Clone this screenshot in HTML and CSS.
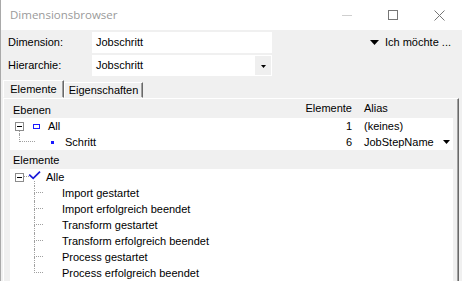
FILE: index.html
```html
<!DOCTYPE html>
<html>
<head>
<meta charset="utf-8">
<link rel="stylesheet" href="styles.css">
</head>
<body>
<div class="window">
  <div class="titlebar">
    <span class="title">Dimensionsbrowser</span>
    <div class="cbtns">
      <span class="cbtn"><svg width="10" height="10" viewBox="0 0 10 10"><path d="M0 5.5H10" stroke="#cfcfcf" stroke-width="1"/></svg></span>
      <span class="cbtn"><svg width="10" height="10" viewBox="0 0 10 10"><rect x="0.5" y="0.5" width="9" height="9" fill="none" stroke="#767676"/></svg></span>
      <span class="cbtn"><svg width="11" height="11" viewBox="0 0 11 11"><path d="M0.5 0.5L10.5 10.5M10.5 0.5L0.5 10.5" stroke="#767676" stroke-width="1"/></svg></span>
    </div>
  </div>
  <div class="content">
    <div class="form">
      <div class="fields">
        <div class="field"><label class="lbl">Dimension:</label><div class="input">Jobschritt</div></div>
        <div class="field"><label class="lbl">Hierarchie:</label>
          <div class="combo"><span class="combo-text">Jobschritt</span><span class="dd"><svg width="5" height="3" viewBox="0 0 5 3"><path d="M0 0H5L2.5 3Z" fill="#000"/></svg></span></div>
        </div>
      </div>
      <div class="menu"><svg width="9" height="5" viewBox="0 0 9 5"><path d="M0 0H9L4.5 5Z" fill="#000"/></svg><span>Ich möchte ...</span></div>
    </div>
    <div class="tabs">
      <div class="tab active">Elemente</div>
      <div class="tab">Eigenschaften</div>
    </div>
    <div class="panel">
      <div class="hdr"><span class="c-name">Ebenen</span><span class="c-num">Elemente</span><span class="c-alias">Alias</span></div>
      <div class="list">
        <div class="row">
          <div class="c-name">
            <span class="tog-col"><span class="box"><span class="minus"></span></span><span class="vdots"></span></span>
            <span class="lvl-rect"></span>
            <span class="txt all">All</span>
          </div>
          <span class="c-num">1</span>
          <span class="c-alias">(keines)</span>
        </div>
        <div class="row">
          <div class="c-name">
            <span class="conn-l"></span>
            <span class="lvl-sq"></span>
            <span class="txt schritt">Schritt</span>
          </div>
          <span class="c-num">6</span>
          <span class="c-alias alias-dd">JobStepName<svg width="7" height="4" viewBox="0 0 7 4"><path d="M0 0H7L3.5 4Z" fill="#000"/></svg></span>
        </div>
      </div>
      <div class="sec">Elemente</div>
      <div class="tree">
        <div class="trow root">
          <span class="box"><span class="minus"></span></span>
          <svg class="check" width="17" height="16" viewBox="0 0 17 16"><path d="M0 7.5H5" stroke="#a0a0a0" stroke-dasharray="1 1"/><path d="M5.2 5.6L9.2 9.4L16 2.6" fill="none" stroke="#1a1ad8" stroke-width="1.7"/><path d="M10.5 12V16" stroke="#a0a0a0" stroke-dasharray="1 1"/></svg>
          <span class="txt alle">Alle</span>
        </div>
        <div class="trow leaf"><span class="tick"><span class="up"></span><span class="down"></span></span><span class="txt">Import gestartet</span></div>
        <div class="trow leaf"><span class="tick"><span class="up"></span><span class="down"></span></span><span class="txt">Import erfolgreich beendet</span></div>
        <div class="trow leaf"><span class="tick"><span class="up"></span><span class="down"></span></span><span class="txt">Transform gestartet</span></div>
        <div class="trow leaf"><span class="tick"><span class="up"></span><span class="down"></span></span><span class="txt">Transform erfolgreich beendet</span></div>
        <div class="trow leaf"><span class="tick"><span class="up"></span><span class="down"></span></span><span class="txt">Process gestartet</span></div>
        <div class="trow leaf"><span class="tick"><span class="up"></span><span class="down last"></span></span><span class="txt">Process erfolgreich beendet</span></div>
      </div>
    </div>
  </div>
</div>
</body>
</html>
```
FILE: styles.css
```css
* { box-sizing: border-box; }
html, body { margin: 0; padding: 0; }
body {
  width: 462px;
  height: 281px;
  overflow: hidden;
  background: #f0f0f0;
  font: 11px/13px "Liberation Sans", Arial, sans-serif;
  color: #000;
}
.window {
  height: 281px;
  border-left: 1px solid #a9a9a9;
  display: flex;
  flex-direction: column;
}
.titlebar {
  height: 30px;
  flex: none;
  background: #fff;
  display: flex;
  align-items: center;
}
.title {
  flex: 1;
  padding-left: 9px;
  font: 11.5px/14px "Open Sans", sans-serif;
  color: #9a9a9a;
}
.cbtns { display: flex; align-self: stretch; }
.cbtn {
  width: 46px;
  display: flex;
  align-items: center;
  justify-content: center;
}
.cbtn svg { display: block; }

.content {
  flex: 1;
  min-height: 0;
  padding: 2px 3px 0 2px;
  display: flex;
  flex-direction: column;
}
.form { display: flex; }
.fields { display: flex; flex-direction: column; gap: 2px; }
.field { display: flex; align-items: center; height: 21px; }
.lbl { width: 89px; padding-left: 5px; }
.input {
  width: 180px;
  height: 21px;
  background: #fff;
  padding-left: 4px;
  line-height: 21px;
}
.combo {
  width: 180px;
  height: 21px;
  background: #fff;
  padding: 1px;
  display: flex;
}
.combo-text { flex: 1; padding-left: 3px; line-height: 19px; }
.dd {
  width: 16px;
  height: 19px;
  background: #efefef;
  display: flex;
  align-items: center;
  justify-content: center;
  padding-top: 1px;
}
.dd svg { display: block; }
.menu {
  margin-left: auto;
  height: 21px;
  display: flex;
  align-items: center;
  gap: 6px;
  padding-right: 8px;
}
.menu svg { display: block; }

.tabs {
  display: flex;
  align-items: flex-end;
  height: 18px;
  margin-top: 4px;
  flex: none;
}
.tab {
  height: 16px;
  width: 79px;
  border: 1px solid;
  border-color: #fff #696969 transparent #fff;
  box-shadow: inset -1px 0 #a0a0a0;
  text-align: center;
  line-height: 15px;
}
.tab.active {
  height: 18px;
  width: 61px;
  line-height: 17px;
}

.panel {
  flex: 1;
  min-height: 0;
  border-top: 1px solid #fff;
  border-left: 1px solid #fff;
  border-right: 1px solid #696969;
  box-shadow: inset -1px 0 #a0a0a0;
  padding: 0 5px 0 6px;
  display: flex;
  flex-direction: column;
}
.hdr {
  height: 19px;
  padding-top: 3px;
  display: flex;
  flex: none;
}
.c-name { flex: 1; display: flex; align-items: center; }
.hdr .c-name { padding-left: 3px; }
.c-num { text-align: right; }
.c-alias { width: 101px; padding-left: 12px; }

.list { background: #fff; flex: none; }
.row { height: 16px; display: flex; align-items: center; line-height: 16px; }
.row .c-name { align-self: stretch; }

.tog-col {
  margin-left: 5px;
  width: 9px;
  align-self: stretch;
  display: flex;
  flex-direction: column;
  align-items: center;
  padding-top: 4px;
}
.box {
  width: 9px;
  height: 9px;
  border: 1px solid #8c8c8c;
  display: flex;
  align-items: center;
  justify-content: center;
  flex: none;
  background: #fff;
}
.minus { width: 5px; height: 1px; background: #000; }
.vdots {
  flex: 1;
  width: 0;
  border-left: 1px dotted #a0a0a0;
}
.lvl-rect {
  margin-left: 9px;
  width: 7px;
  height: 5px;
  border: 1px solid #1a1aff;
}
.txt.all { margin-left: 8px; }
.conn-l {
  margin-left: 9px;
  width: 16px;
  height: 8px;
  align-self: flex-start;
  border-left: 1px dotted #a0a0a0;
  border-bottom: 1px dotted #a0a0a0;
}
.lvl-sq {
  margin-left: 16px;
  width: 3px;
  height: 3px;
  background: #1a1aff;
}
.txt.schritt { margin-left: 11px; }
.alias-dd { display: flex; align-items: center; justify-content: space-between; padding-right: 3px; }
.alias-dd svg { display: block; }

.sec {
  height: 19px;
  padding-top: 4px;
  padding-left: 3px;
  flex: none;
}
.tree { flex: 1; background: #fff; }
.trow { height: 16px; display: flex; align-items: center; line-height: 16px; }
.trow.root .box { margin-left: 5px; }
.check { display: block; }
.txt.alle { margin-left: 5px; }
.tick {
  margin-left: 24px;
  width: 9px;
  align-self: stretch;
  display: flex;
  flex-direction: column;
}
.tick .up {
  height: 8px;
  border-left: 1px dotted #a0a0a0;
  border-bottom: 1px dotted #a0a0a0;
}
.tick .down {
  flex: 1;
  border-left: 1px dotted #a0a0a0;
}
.tick .down.last { border-left-color: transparent; }
.leaf .txt { margin-left: 19px; }
```
